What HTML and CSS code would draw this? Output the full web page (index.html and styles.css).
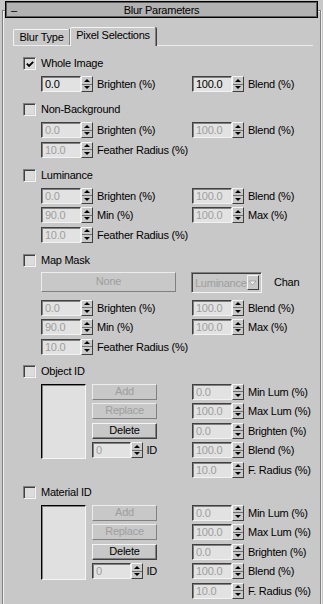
FILE: index.html
```html
<!DOCTYPE html>
<html>
<head>
<meta charset="utf-8">
<link rel="stylesheet" href="styles.css">
</head>
<body>
<div class="title"><span class="minus">–</span><span class="ttext">Blur Parameters</span><span></span></div>
<div class="frame">
  <div class="tabs">
    <div class="tab t1">Blur Type</div>
    <div class="tab t2 active">Pixel Selections</div>
  </div>
  <div class="body">
    <section class="group g1">
      <div class="check"><span class="box"><svg width="11" height="11" viewBox="0 0 11 11"><path d="M2 4.5 L4.5 7 L9 2.5" fill="none" stroke="#000" stroke-width="2"/></svg></span>Whole Image</div>
      <div class="rows">
        <div class="spin"><span class="fld">0.0</span><span class="arr"><i class="up"></i><i class="dn"></i></span><span class="lbl">Brighten (%)</span></div>
        <div class="spin"><span class="fld">100.0</span><span class="arr"><i class="up"></i><i class="dn"></i></span><span class="lbl">Blend (%)</span></div>
      </div>
    </section>

    <section class="group g2">
      <div class="check"><span class="box"></span>Non-Background</div>
      <div class="rows">
        <div class="spin"><span class="fld dis">0.0</span><span class="arr"><i class="up"></i><i class="dn"></i></span><span class="lbl">Brighten (%)</span></div>
        <div class="spin"><span class="fld dis">100.0</span><span class="arr"><i class="up"></i><i class="dn"></i></span><span class="lbl">Blend (%)</span></div>
        <div class="spin"><span class="fld dis">10.0</span><span class="arr"><i class="up"></i><i class="dn"></i></span><span class="lbl">Feather Radius (%)</span></div>
      </div>
    </section>

    <section class="group g3">
      <div class="check"><span class="box"></span>Luminance</div>
      <div class="rows">
        <div class="spin"><span class="fld dis">0.0</span><span class="arr"><i class="up"></i><i class="dn"></i></span><span class="lbl">Brighten (%)</span></div>
        <div class="spin"><span class="fld dis">100.0</span><span class="arr"><i class="up"></i><i class="dn"></i></span><span class="lbl">Blend (%)</span></div>
        <div class="spin"><span class="fld dis">90.0</span><span class="arr"><i class="up"></i><i class="dn"></i></span><span class="lbl">Min (%)</span></div>
        <div class="spin"><span class="fld dis">100.0</span><span class="arr"><i class="up"></i><i class="dn"></i></span><span class="lbl">Max (%)</span></div>
        <div class="spin"><span class="fld dis">10.0</span><span class="arr"><i class="up"></i><i class="dn"></i></span><span class="lbl">Feather Radius (%)</span></div>
      </div>
    </section>

    <section class="group g4">
      <div class="check"><span class="box"></span>Map Mask</div>
      <div class="maprow">
        <div class="btn dbtn none">None</div>
        <div class="combo"><span class="ctext">Luminance</span><span class="carr"><svg width="9" height="6" viewBox="0 0 9 6"><path d="M1 1 L8 1 L4.5 5 Z" fill="#f2f2f2" stroke="#9a9a9a" stroke-width="0.8"/></svg></span></div>
        <span class="chan">Chan</span>
      </div>
      <div class="rows after-map">
        <div class="spin"><span class="fld dis">0.0</span><span class="arr"><i class="up"></i><i class="dn"></i></span><span class="lbl">Brighten (%)</span></div>
        <div class="spin"><span class="fld dis">100.0</span><span class="arr"><i class="up"></i><i class="dn"></i></span><span class="lbl">Blend (%)</span></div>
        <div class="spin"><span class="fld dis">90.0</span><span class="arr"><i class="up"></i><i class="dn"></i></span><span class="lbl">Min (%)</span></div>
        <div class="spin"><span class="fld dis">100.0</span><span class="arr"><i class="up"></i><i class="dn"></i></span><span class="lbl">Max (%)</span></div>
        <div class="spin"><span class="fld dis">10.0</span><span class="arr"><i class="up"></i><i class="dn"></i></span><span class="lbl">Feather Radius (%)</span></div>
      </div>
    </section>

    <section class="group g5">
      <div class="check"><span class="box"></span>Object ID</div>
      <div class="idblock">
        <div class="list"></div>
        <div class="btncol">
          <div class="btn dbtn">Add</div>
          <div class="btn dbtn">Replace</div>
          <div class="btn">Delete</div>
          <div class="spin"><span class="fld dis">0</span><span class="arr"><i class="up"></i><i class="dn"></i></span><span class="lbl">ID</span></div>
        </div>
        <div class="rcol">
          <div class="spin"><span class="fld dis">0.0</span><span class="arr"><i class="up"></i><i class="dn"></i></span><span class="lbl">Min Lum (%)</span></div>
          <div class="spin"><span class="fld dis">100.0</span><span class="arr"><i class="up"></i><i class="dn"></i></span><span class="lbl">Max Lum (%)</span></div>
          <div class="spin"><span class="fld dis">0.0</span><span class="arr"><i class="up"></i><i class="dn"></i></span><span class="lbl">Brighten (%)</span></div>
          <div class="spin"><span class="fld dis">100.0</span><span class="arr"><i class="up"></i><i class="dn"></i></span><span class="lbl">Blend (%)</span></div>
          <div class="spin"><span class="fld dis">10.0</span><span class="arr"><i class="up"></i><i class="dn"></i></span><span class="lbl">F. Radius (%)</span></div>
        </div>
      </div>
    </section>

    <section class="group g6">
      <div class="check"><span class="box"></span>Material ID</div>
      <div class="idblock">
        <div class="list"></div>
        <div class="btncol">
          <div class="btn dbtn">Add</div>
          <div class="btn dbtn">Replace</div>
          <div class="btn">Delete</div>
          <div class="spin"><span class="fld dis">0</span><span class="arr"><i class="up"></i><i class="dn"></i></span><span class="lbl">ID</span></div>
        </div>
        <div class="rcol">
          <div class="spin"><span class="fld dis">0.0</span><span class="arr"><i class="up"></i><i class="dn"></i></span><span class="lbl">Min Lum (%)</span></div>
          <div class="spin"><span class="fld dis">100.0</span><span class="arr"><i class="up"></i><i class="dn"></i></span><span class="lbl">Max Lum (%)</span></div>
          <div class="spin"><span class="fld dis">0.0</span><span class="arr"><i class="up"></i><i class="dn"></i></span><span class="lbl">Brighten (%)</span></div>
          <div class="spin"><span class="fld dis">100.0</span><span class="arr"><i class="up"></i><i class="dn"></i></span><span class="lbl">Blend (%)</span></div>
          <div class="spin"><span class="fld dis">10.0</span><span class="arr"><i class="up"></i><i class="dn"></i></span><span class="lbl">F. Radius (%)</span></div>
        </div>
      </div>
    </section>
  </div>
</div>
</body>
</html>
```
FILE: styles.css
```css
* { box-sizing: border-box; }
html, body { margin: 0; padding: 0; }
body {
  background: #c8c8c8;
  font-family: "Liberation Sans", Arial, sans-serif;
  font-size: 11px;
  letter-spacing: -0.25px;
  color: #000;
  width: 323px;
  height: 604px;
  overflow: hidden;
}

/* title bar */
.title {
  position: relative;
  z-index: 1;
  margin: 1px 5px 0 5px;
  height: 17px;
  background: #b2b2b2;
  border: 1px solid #000;
  box-shadow: inset 1px 1px 0 #5c5c5c, inset -1px -1px 0 #5c5c5c;
  display: grid;
  grid-template-columns: 20px 1fr 20px;
  align-items: center;
  line-height: 14px;
}
.minus { padding-left: 5px; }
.ttext { text-align: center; }

/* outer frame */
.frame {
  margin: -8px 2px 0 2px;
  border: 1px solid #808080;
  border-bottom: 0;
  box-shadow: inset 1px 1px 0 #f0f0f0, 1px 0 0 #f0f0f0;
  min-height: 600px;
  padding: 16px 7px 0 10px;
}

/* tabs */
.tabs {
  display: flex;
  align-items: flex-end;
  height: 19px;
  border-bottom: 1px solid #ececec;
}
.tab {
  border-top: 1px solid #f4f4f4;
  border-left: 1px solid #f4f4f4;
  border-right: 1px solid #808080;
  border-radius: 2px 2px 0 0;
  box-shadow: 1px 0 0 #404040;
  display: flex;
  align-items: center;
  justify-content: center;
  background: #c8c8c8;
  line-height: 13px;
}
.t1 { width: 57px; height: 16px; padding-bottom: 1px; }
.t2 {
  width: 86px;
  height: 19px;
  margin-bottom: -1px;
  position: relative;
  z-index: 1;
  padding-bottom: 3px;
}

/* body */
.body { padding-left: 10px; }
.group { margin-top: 11px; }
.g5 { margin-top: 10px; }
.g6 { margin-top: 8px; }

.check {
  display: flex;
  align-items: center;
  height: 13px;
  gap: 5px;
  line-height: 13px;
}
.box {
  width: 13px;
  height: 13px;
  border: 1px solid;
  border-color: #808080 #f4f4f4 #f4f4f4 #808080;
  box-shadow: inset 1px 1px 0 #404040, inset -1px -1px 0 #d0d0d0;
  background: #dcdcdc;
  display: flex;
  align-items: center;
  justify-content: center;
}
.box svg { display: block; margin: 1px 0 0 1px; }

.rows {
  margin: 6px 0 0 18px;
  display: grid;
  grid-template-columns: 151px auto;
  row-gap: 3.5px;
}
.after-map { margin-top: 7px; }

/* spinner */
.spin {
  display: flex;
  align-items: center;
  height: 16px;
}
.fld {
  width: 40px;
  height: 16px;
  background: #e2e2e2;
  border: 1px solid;
  border-color: #404040 #f2f2f2 #f2f2f2 #404040;
  box-shadow: inset 1px 1px 0 #808080;
  padding-left: 3px;
  line-height: 14px;
}
.fld.dis { color: #9e9e9e; }
.arr {
  width: 12px;
  height: 16px;
  display: flex;
  flex-direction: column;
  border: 1px solid;
  border-color: #f4f4f4 #404040 #404040 #f4f4f4;
  background: #c8c8c8;
}
.arr i {
  flex: 1;
  display: flex;
  align-items: center;
  justify-content: center;
}
.arr i::before {
  content: "";
  border-left: 3px solid transparent;
  border-right: 3px solid transparent;
}
.arr .up::before { border-bottom: 3px solid #000; }
.arr .dn::before { border-top: 3px solid #000; }
.arr .dn { border-top: 1px solid #707070; }
.lbl { margin-left: 4px; white-space: nowrap; }

/* buttons */
.btn {
  height: 16px;
  width: 65px;
  border: 1px solid;
  border-color: #f4f4f4 #404040 #404040 #f4f4f4;
  box-shadow: inset -1px -1px 0 #808080;
  background: #c8c8c8;
  text-align: center;
  line-height: 13px;
}
.btn.dbtn {
  color: #9e9e9e;
  border-color: #ececec #808080 #808080 #ececec;
  box-shadow: none;
}

/* map mask row */
.maprow {
  margin: 5px 0 0 18px;
  display: flex;
  align-items: center;
  height: 21px;
}
.none { width: 135px; height: 20px; line-height: 17px; }
.combo {
  margin-left: 15px;
  width: 71px;
  height: 21px;
  border: 1px solid;
  border-color: #808080 #f4f4f4 #f4f4f4 #808080;
  box-shadow: inset 1px 1px 0 #404040;
  display: flex;
  align-items: center;
  justify-content: space-between;
  padding: 1px 2px 0 3px;
  color: #9e9e9e;
}
.carr {
  width: 15px;
  height: 15px;
  border: 1px solid;
  border-color: #f4f4f4 #404040 #404040 #f4f4f4;
  background: #c8c8c8;
  display: flex;
  align-items: center;
  justify-content: center;
}
.carr svg { display: block; }
.chan { margin-left: 12px; }

/* id block */
.idblock {
  margin: 6px 0 0 18px;
  display: flex;
  align-items: flex-start;
}
.list {
  width: 45px;
  height: 75px;
  border: 1px solid;
  border-color: #000 #f4f4f4 #f4f4f4 #000;
  box-shadow: inset 1px 1px 0 #808080;
  background: #e0e0e0;
}
.btncol {
  margin-left: 6px;
  display: flex;
  flex-direction: column;
  gap: 3.5px;
  width: 65px;
}
.btncol .fld { width: 41px; }
.rcol {
  margin-left: 35px;
  display: flex;
  flex-direction: column;
  gap: 3.5px;
}
```
